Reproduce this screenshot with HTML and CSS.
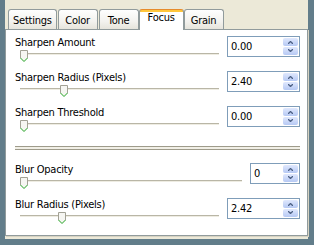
FILE: index.html
```html
<!DOCTYPE html>
<html lang="en">
<head>
    <meta charset="UTF-8">
    <title>Focus</title>
    <link rel="stylesheet" href="styles.css">
</head>
<body>
    <div class="window">
        <!-- Tab strip -->
        <div class="tabs">
            <div class="tab">Settings</div>
            <div class="tab">Color</div>
            <div class="tab">Tone</div>
            <div class="tab active">Focus</div>
            <div class="tab">Grain</div>
        </div>

        <div class="panel">
            <div class="row">
                <div class="ctl">
                    <div class="label">Sharpen Amount</div>
                    <div class="slider"><span class="thumb" style="left:0%"></span></div>
                </div>
                <div class="spin">
                    <div class="spin-val">0.00</div>
                    <div class="spin-btns"><span class="up"></span><span class="down"></span></div>
                </div>
            </div>
            <div class="row">
                <div class="ctl">
                    <div class="label">Sharpen Radius (Pixels)</div>
                    <div class="slider"><span class="thumb" style="left:20%"></span></div>
                </div>
                <div class="spin">
                    <div class="spin-val">2.40</div>
                    <div class="spin-btns"><span class="up"></span><span class="down"></span></div>
                </div>
            </div>
            <div class="row">
                <div class="ctl">
                    <div class="label">Sharpen Threshold</div>
                    <div class="slider"><span class="thumb" style="left:0%"></span></div>
                </div>
                <div class="spin">
                    <div class="spin-val">0.00</div>
                    <div class="spin-btns"><span class="up"></span><span class="down"></span></div>
                </div>
            </div>

            <div class="sep"></div>

            <div class="row">
                <div class="ctl">
                    <div class="label">Blur Opacity</div>
                    <div class="slider"><span class="thumb" style="left:0%"></span></div>
                </div>
                <div class="spin small">
                    <div class="spin-val">0</div>
                    <div class="spin-btns"><span class="up"></span><span class="down"></span></div>
                </div>
            </div>
            <div class="row">
                <div class="ctl">
                    <div class="label">Blur Radius (Pixels)</div>
                    <div class="slider"><span class="thumb" style="left:19%"></span></div>
                </div>
                <div class="spin">
                    <div class="spin-val">2.42</div>
                    <div class="spin-btns"><span class="up"></span><span class="down"></span></div>
                </div>
            </div>
        </div>
    </div>
</body>
</html>
```

FILE: styles.css
```css
/* ------ XP-ish palette ------ */
:root {
    --clr-desk: #627d8a;
    --clr-face: #ece9d8;
    --clr-tab-border: #919b9c;
    --clr-edit-border: #7f9db9;
    --clr-arrow: #4d6185;
}
*,*::before,*::after{box-sizing:border-box;margin:0;padding:0;}
body{
    background:var(--clr-desk);
    font-family:'DejaVu Sans Condensed','Liberation Sans',Arial,sans-serif;
    font-size:11px;
    letter-spacing:-0.25px;
    color:#000;
    width:314px;
    height:245px;
    overflow:hidden;
}
.window{
    margin-left:5px;
    width:303px;
    height:239px;
    background:var(--clr-face);
}

/* -------- Tabs -------- */
.tabs{display:flex;align-items:flex-end;padding:9px 0 0 3px;position:relative;z-index:1;}
.tab{
    min-width:40px;
    margin-right:1px;
    padding:4px 4px 2px;
    text-align:center;
    line-height:13px;
    border:1px solid var(--clr-tab-border);
    border-bottom:none;
    border-radius:3px 3px 0 0;
    background:linear-gradient(#fefefe,#f3f2ee 60%,#e6e4db);
}
.tab.active{
    margin:0 0 -1px -1px;
    padding:1px 8px 6px;
    border-top:1px solid #e68b2c;
    background:linear-gradient(#ffc73c 0,#ffc73c 2px,#fff 2px);
}

/* -------- Panel -------- */
.panel{
    height:207px;
    padding:5px 7px 0 9px;
    background:#fff;
    border:1px solid var(--clr-tab-border);
    box-shadow:1px 1px 0 #d6d2c2;
}
.row{display:flex;align-items:flex-start;gap:8px;margin-bottom:8px;}
.ctl{flex:1;}
.label{line-height:13px;padding-top:1px;height:13px;}

.slider{position:relative;height:14px;margin-left:5px;}
.slider::before{
    content:'';position:absolute;left:0;right:0;top:5px;height:2px;
    border-top:1px solid #b9b6a6;background:#eeece2;
}
.thumb{
    position:absolute;top:2px;width:8px;height:12px;
    background:url("data:image/svg+xml,%3Csvg xmlns='http://www.w3.org/2000/svg' width='8' height='12'%3E%3Cpath d='M.5 8V.5h7V8' fill='%23f6f6f2' stroke='%23a2a195'/%3E%3Cpath d='M.5 8l3.5 3.5L7.5 8' fill='%23f6f6f2' stroke='%2321a121'/%3E%3C/svg%3E") no-repeat;
}

/* spin box */
.spin{
    display:flex;
    width:73px;height:21px;margin-top:1px;
    border:1px solid var(--clr-edit-border);
    background:#fff;
}
.spin.small{width:50px;}
.spin-val{flex:1;padding-left:3px;line-height:19px;}
.spin-btns{display:flex;flex-direction:column;width:16px;padding:1px 1px 1px 0;gap:1px;}
.spin-btns span{
    flex:1;border-radius:2px;
    background:#c6d4f7 no-repeat center;
    background-image:linear-gradient(#e0e8fd,#b6c9f4);
    position:relative;
}
.spin-btns span::after{
    content:'';position:absolute;left:5px;width:5px;height:3px;
}
.spin-btns .up::after{
    top:3px;
    background:url("data:image/svg+xml,%3Csvg xmlns='http://www.w3.org/2000/svg' width='5' height='3'%3E%3Cpath d='M0 3L2.5 .5 5 3' fill='none' stroke='%234d6185' stroke-width='1.3'/%3E%3C/svg%3E");
}
.spin-btns .down::after{
    top:2px;
    background:url("data:image/svg+xml,%3Csvg xmlns='http://www.w3.org/2000/svg' width='5' height='3'%3E%3Cpath d='M0 0L2.5 2.5 5 0' fill='none' stroke='%234d6185' stroke-width='1.3'/%3E%3C/svg%3E");
}

.sep{height:4px;margin:14px 0 12px;border-top:1px solid #9e9b8b;border-bottom:1px solid #9e9b8b;background:#f1efe6;}
```
